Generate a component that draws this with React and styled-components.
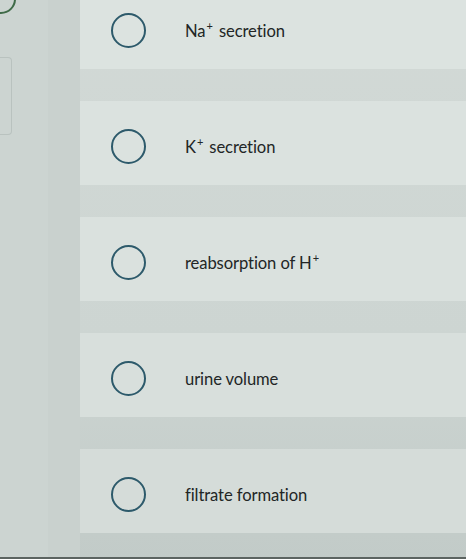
import React from "react";
import styled, { createGlobalStyle } from "styled-components";

const GlobalStyle = createGlobalStyle`
  html, body {
    margin: 0;
    padding: 0;
    background: #cad2cf;
  }
`;

const Screen = styled.div`
  width: 466px;
  height: 559px;
  overflow: hidden;
  display: flex;
  flex-direction: row;
  background: linear-gradient(180deg, #d2d9d6 0%, #cdd5d2 60%, #c2cbc8 100%);
  border-bottom: 2px solid #5c6461;
  box-sizing: border-box;
  font-family: Lato, "Open Sans", sans-serif;
`;

const Sidebar = styled.div`
  width: 48px;
  flex-shrink: 0;
  display: flex;
  flex-direction: column;
  background: #ccd4d1;
`;

const StepBadge = styled.div`
  width: 26px;
  height: 26px;
  margin: -16px 0 0 -14px;
  border: 2px solid #3f6b48;
  border-radius: 50%;
`;

const SideTab = styled.div`
  width: 11px;
  height: 76px;
  margin-top: 43px;
  border: 1px solid #b9c2bf;
  border-left: none;
  border-radius: 0 4px 4px 0;
`;

const Gutter = styled.div`
  width: 32px;
  flex-shrink: 0;
  background: #c9d1ce;
`;

const OptionList = styled.ul`
  list-style: none;
  margin: -15px 0 0;
  padding: 0;
  flex: 1;
  display: flex;
  flex-direction: column;
  gap: 32px;
`;

const OptionRow = styled.li`
  height: 84px;
  display: flex;
  align-items: center;
  padding: 7px 0 0 31px;
  box-sizing: border-box;
  background: ${({ $shade }) => $shade};
`;

const Radio = styled.span`
  width: 35px;
  height: 35px;
  box-sizing: border-box;
  border: 2px solid #2d5a6b;
  border-radius: 50%;
  flex-shrink: 0;
`;

const Label = styled.span`
  margin-left: 39px;
  font-size: 16.6px;
  color: #222626;
  letter-spacing: -0.1px;

  sup {
    font-size: 11px;
    line-height: 0;
    vertical-align: 7px;
    margin: 0 2px 0 1px;
  }
`;

const options = [
  { id: "na", text: <>Na<sup>+</sup> secretion</>, shade: "#dce3e0" },
  { id: "k", text: <>K<sup>+</sup> secretion</>, shade: "#dbe2df" },
  { id: "h", text: <>reabsorption of H<sup>+</sup></>, shade: "#dae1de" },
  { id: "urine", text: <>urine volume</>, shade: "#d8dfdc" },
  { id: "filtrate", text: <>filtrate formation</>, shade: "#d5dcd9" },
];

export default function App() {
  return (
    <>
      <GlobalStyle />
      <Screen>
        <Sidebar>
          <StepBadge />
          <SideTab />
        </Sidebar>
        <Gutter />
        <OptionList>
          {options.map((o) => (
            <OptionRow key={o.id} $shade={o.shade}>
              <Radio />
              <Label>{o.text}</Label>
            </OptionRow>
          ))}
        </OptionList>
      </Screen>
    </>
  );
}
